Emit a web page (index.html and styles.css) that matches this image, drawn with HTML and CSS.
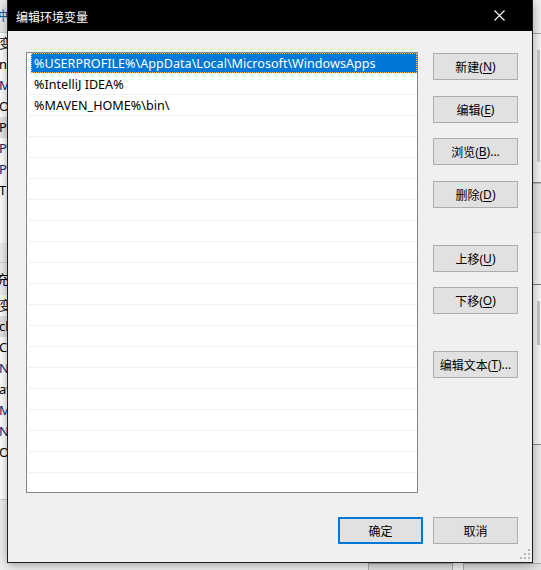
FILE: index.html
```html
<!DOCTYPE html>
<html>
<head>
<meta charset="utf-8">
<link rel="stylesheet" href="styles.css">
</head>
<body>
<div class="desk">
  <div class="bg-left">
    <div class="bg-head">冲</div>
    <div class="bg-rows">
      <div class="bg-row">变</div>
      <div class="bg-row">n</div>
      <div class="bg-row dark">M</div>
      <div class="bg-row">O</div>
      <div class="bg-row hl">Pa</div>
      <div class="bg-row dark">PT</div>
      <div class="bg-row dark">PT</div>
      <div class="bg-row">TE</div>
      <div class="bg-row"></div>
      <div class="bg-row"></div>
    </div>
    <div class="bg-sep"></div>
    <div class="bg-head2">充</div>
    <div class="bg-rows2">
      <div class="bg-row">变</div>
      <div class="bg-row hl">cl</div>
      <div class="bg-row">Co</div>
      <div class="bg-row dark">N</div>
      <div class="bg-row">av</div>
      <div class="bg-row dark">M</div>
      <div class="bg-row dark">N</div>
      <div class="bg-row">O</div>
    </div>
    <div class="bg-fill"></div>
  </div>
  <div class="bg-right">
    <div class="br top"></div>
    <div class="br list1"><div class="thumb t1"></div></div>
    <div class="br band"></div>
    <div class="br rows"></div>
    <div class="br list2"><div class="thumb t2"></div></div>
    <div class="br tail"></div>
  </div>
  <div class="bg-bottom">
    <div class="bg-btn a"></div>
    <div class="bg-btn b"></div>
  </div>
</div>

<div class="dialog">
  <div class="titlebar">
    <span class="title">编辑环境变量</span>
    <svg class="close" width="11" height="11" viewBox="0 0 11 11"><path d="M0.5 0.5 L10.5 10.5 M10.5 0.5 L0.5 10.5" stroke="#fff" stroke-width="1.1" fill="none"/></svg>
  </div>
  <div class="content">
    <div class="main">
      <div class="list">
        <div class="row"><div class="item sel">%USERPROFILE%\AppData\Local\Microsoft\WindowsApps</div></div>
        <div class="row"><div class="item">%IntelliJ IDEA%</div></div>
        <div class="row"><div class="item">%MAVEN_HOME%\bin\</div></div>
        <div class="row"><div class="item"></div></div>
        <div class="row"><div class="item"></div></div>
        <div class="row"><div class="item"></div></div>
        <div class="row"><div class="item"></div></div>
        <div class="row"><div class="item"></div></div>
        <div class="row"><div class="item"></div></div>
        <div class="row"><div class="item"></div></div>
        <div class="row"><div class="item"></div></div>
        <div class="row"><div class="item"></div></div>
        <div class="row"><div class="item"></div></div>
        <div class="row"><div class="item"></div></div>
        <div class="row"><div class="item"></div></div>
        <div class="row"><div class="item"></div></div>
        <div class="row"><div class="item"></div></div>
        <div class="row"><div class="item"></div></div>
        <div class="row"><div class="item"></div></div>
        <div class="row"><div class="item"></div></div>
        <div class="row"><div class="item"></div></div>
      </div>
      <div class="side">
        <button class="btn">新建(<u>N</u>)</button>
        <button class="btn m1">编辑(<u>E</u>)</button>
        <button class="btn">浏览(<u>B</u>)...</button>
        <button class="btn m1">删除(<u>D</u>)</button>
        <button class="btn sep">上移(<u>U</u>)</button>
        <button class="btn">下移(<u>O</u>)</button>
        <button class="btn sep">编辑文本(<u>T</u>)...</button>
      </div>
    </div>
    <div class="footer">
      <button class="btn default">确定</button>
      <button class="btn">取消</button>
    </div>
  </div>
  <svg class="grip" width="10" height="10" viewBox="0 0 10 10">
    <rect x="8" y="0" width="2" height="2" fill="#b8b8b8"/>
    <rect x="4" y="4" width="2" height="2" fill="#b8b8b8"/>
    <rect x="8" y="4" width="2" height="2" fill="#b8b8b8"/>
    <rect x="0" y="8" width="2" height="2" fill="#b8b8b8"/>
    <rect x="4" y="8" width="2" height="2" fill="#b8b8b8"/>
    <rect x="8" y="8" width="2" height="2" fill="#b8b8b8"/>
  </svg>
</div>
</body>
</html>
```

FILE: styles.css
```css
* { box-sizing: border-box; }
html, body {
  margin: 0;
  padding: 0;
  width: 541px;
  height: 570px;
  overflow: hidden;
  background: #f0f0f0;
  font-family: "Noto Sans", "Noto Sans CJK SC", sans-serif;
  font-size: 12px;
  color: #000;
}

/* background window behind dialog */
.desk {
  position: absolute;
  left: 0; top: 0;
  width: 541px; height: 570px;
  background: #f0f0f0;
}
.bg-left {
  position: absolute;
  left: 0; top: 0;
  width: 10px; height: 570px;
  display: flex;
  flex-direction: column;
  overflow: hidden;
}
.bg-head {
  height: 33px;
  background: #e9e9e9;
  border-bottom: 1px solid #d6d6d6;
  line-height: 30px;
  color: #1a5a9a;
  font-size: 13px;
  text-indent: -5px;
  flex: none;
}
.bg-rows { background: #fff; display: flex; flex-direction: column; flex: none; }
.bg-row {
  height: 21px;
  line-height: 21px;
  font-size: 13px;
  white-space: nowrap;
  text-indent: -1px;
  flex: none;
}
.bg-row.dark { color: #0a246a; }
.bg-row.hl { background: #e5e5e5; }
.bg-sep { height: 20px; background: #f0f0f0; border-bottom: 1px solid #d0d0d0; flex: none; }
.bg-head2 { height: 32px; line-height: 32px; font-size: 13px; background: #f0f0f0; text-indent: -4px; flex: none; }
.bg-rows2 { background: #fff; display: flex; flex-direction: column; height: 205px; flex: none; border-bottom: 1px solid #d0d0d0; }
.bg-fill { flex: 1; background: #f0f0f0; }

.bg-right {
  position: absolute;
  left: 533px; top: 0;
  width: 8px; height: 570px;
  display: flex;
  flex-direction: column;
}
.br { flex: none; }
.br.top { height: 34px; background: #f0f0f0; border-bottom: 1px solid #a8a8a8; }
.br.list1 { height: 149px; background: #f4f4f4; padding: 16px 1px 0 4px; border-bottom: 1px solid #8a8a8a; }
.thumb { background: #c8c8c8; }
.thumb.t1 { height: 112px; }
.br.band { height: 50px; background: #e6e6e6; border-top: 1px solid #c0c0c0; border-bottom: 1px solid #c8c8c8; }
.br.rows { height: 52px; background: #f2f2f2; border-bottom: 1px solid #7a7a7a; }
.br.list2 { height: 160px; background: #f6f6f6; padding: 16px 1px 0 4px; border-bottom: 1px solid #8a8a8a; }
.thumb.t2 { height: 44px; }
.br.tail { height: 124px; background: #ececec; border-bottom: 1px solid #b0b0b0; }

.bg-bottom {
  position: absolute;
  left: 0; top: 563px;
  width: 541px; height: 7px;
  display: flex;
  gap: 10px;
  padding-left: 368px;
}
.bg-btn {
  width: 85px; height: 20px;
  background: #e1e1e1;
  border: 1px solid #adadad;
  flex: none;
}
.bg-btn.b { width: 90px; }

/* dialog */
.dialog {
  position: absolute;
  left: 7px; top: 0;
  width: 526px; height: 563px;
  background: #f0f0f0;
  border: 1px solid #1f1f1f;
  border-top: none;
  box-shadow: 0 2px 10px rgba(0,0,0,0.35);
  display: flex;
  flex-direction: column;
}
.titlebar {
  height: 31px;
  background: #000;
  color: #fff;
  display: flex;
  align-items: center;
  justify-content: space-between;
  padding: 0 27px 0 8px;
  flex: none;
}
.title {
  font-family: "Noto Sans CJK SC", sans-serif;
  font-size: 12px;
  padding-top: 1px;
}
.close { display: block; }

.content {
  padding: 21px 14px 18px 18px;
  display: flex;
  flex-direction: column;
}
.main {
  display: flex;
  gap: 15px;
}
.list {
  width: 392px;
  height: 441px;
  background: #fff;
  border: 1px solid #828790;
  overflow: hidden;
  display: flex;
  flex-direction: column;
  padding-left: 1px;
}
.row {
  height: 21px;
  flex: none;
  border-bottom: 1px solid #f0f0f0;
  padding-left: 3px;
}
.item {
  height: 20px;
  line-height: 22px;
  padding-left: 3px;
  white-space: nowrap;
  font-size: 12.6px;
}
.item.sel {
  background: #0078d7;
  color: #fff;
  outline: 1px dotted #f7b36b;
  outline-offset: -1px;
}

.side {
  width: 85px;
  display: flex;
  flex-direction: column;
  padding-top: 1px;
  gap: 15px;
}
.btn {
  width: 85px;
  height: 27px;
  background: #e1e1e1;
  border: 1px solid #adadad;
  font-family: "Noto Sans", "Noto Sans CJK SC", sans-serif;
  font-size: 12px;
  color: #000;
  padding: 0;
  margin: 0;
  display: flex;
  align-items: center;
  justify-content: center;
  flex: none;
}
.btn u { text-decoration: underline; text-underline-offset: 2px; }
.btn.m1 { margin-top: 1px; }
.btn.sep { margin-top: 22px; }
.btn.default { border: 2px solid #0078d7; }

.footer {
  display: flex;
  justify-content: flex-end;
  gap: 10px;
  margin-top: 24px;
}

.grip {
  position: absolute;
  right: 2px;
  bottom: 3px;
}
```
